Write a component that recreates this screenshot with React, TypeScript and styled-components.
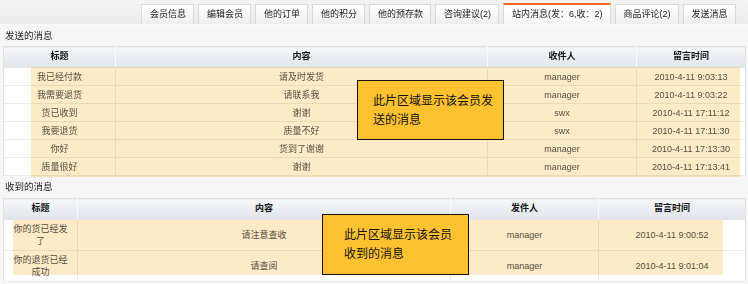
import React from 'react';
import styled, { createGlobalStyle } from 'styled-components';

const tabs = ['会员信息', '编辑会员', '他的订单', '他的积分', '他的预存款', '咨询建议(2)', '站内消息(发：6,收：2)', '商品评论(2)', '发送消息'];
const activeTab = 6;

const sent = [
  { title: '我已经付款', content: '请及时发货', who: 'manager', time: '2010-4-11 9:03:13' },
  { title: '我需要退货', content: '请联系我', who: 'manager', time: '2010-4-11 9:03:22' },
  { title: '货已收到', content: '谢谢', who: 'swx', time: '2010-4-11 17:11:12' },
  { title: '我要退货', content: '质量不好', who: 'swx', time: '2010-4-11 17:11:30' },
  { title: '你好', content: '货到了谢谢', who: 'manager', time: '2010-4-11 17:13:30' },
  { title: '质量很好', content: '谢谢', who: 'manager', time: '2010-4-11 17:13:41' },
];

const received = [
  { title: ['你的货已经发', '了'], content: '请注意查收', who: 'manager', time: '2010-4-11 9:00:52' },
  { title: ['你的退货已经', '成功'], content: '请查阅', who: 'manager', time: '2010-4-11 9:01:04' },
];

export default function App() {
  return (
    <>
      <GlobalStyle />
      <Page>
        <TabBar>
          {tabs.map((t, i) => (
            <Tab key={t} $active={i === activeTab}>
              {t}
            </Tab>
          ))}
        </TabBar>

        <SectionTitle>发送的消息</SectionTitle>
        <TableWrap>
          <Table>
            <colgroup>
              <col style={{ width: 112 }} />
              <col style={{ width: 372 }} />
              <col style={{ width: 149 }} />
              <col />
            </colgroup>
            <thead>
              <tr>
                <Th>标题</Th>
                <Th>内容</Th>
                <Th>收件人</Th>
                <Th>留言时间</Th>
              </tr>
            </thead>
            <tbody>
              {sent.map((m) => (
                <tr key={m.time}>
                  <Td $h={17}>{m.title}</Td>
                  <Td $h={17}>{m.content}</Td>
                  <Td $h={17}>{m.who}</Td>
                  <Td $h={17}>{m.time}</Td>
                </tr>
              ))}
            </tbody>
          </Table>
          <Highlight $left={28} $top={21} $width={709} $height={110} />
          <Note $left={354} $top={34} $width={147} $height={60} $pad={15}>
            <span>此片区域显示该会员发</span>
            <span>送的消息</span>
          </Note>
        </TableWrap>

        <SectionTitle $gap>收到的消息</SectionTitle>
        <TableWrap>
          <Table>
            <colgroup>
              <col style={{ width: 74 }} />
              <col style={{ width: 373 }} />
              <col style={{ width: 148 }} />
              <col />
            </colgroup>
            <thead>
              <tr>
                <Th>标题</Th>
                <Th>内容</Th>
                <Th>发件人</Th>
                <Th>留言时间</Th>
              </tr>
            </thead>
            <tbody>
              {received.map((m) => (
                <tr key={m.time}>
                  <Td $h={30}>
                    {m.title[0]}
                    <br />
                    {m.title[1]}
                  </Td>
                  <Td $h={30}>{m.content}</Td>
                  <Td $h={30}>{m.who}</Td>
                  <Td $h={30}>{m.time}</Td>
                </tr>
              ))}
            </tbody>
          </Table>
          <Highlight $left={10} $top={22} $width={710} $height={55} />
          <Note $left={319} $top={16} $width={147} $height={61} $pad={21}>
            <span>此片区域显示该会员</span>
            <span>收到的消息</span>
          </Note>
        </TableWrap>
      </Page>
    </>
  );
}

const GlobalStyle = createGlobalStyle`
  html, body {
    margin: 0;
    padding: 0;
    background: #f6f6f6;
  }
  body {
    font: normal normal 9px/1.3 'Liberation Sans', 'Noto Sans CJK SC', sans-serif;
    color: #555;
  }
`;

const Page = styled.div`
  width: 748px;
  height: 284px;
  overflow: hidden;
  padding: 0 2px 0 3px;
  box-sizing: border-box;
`;

const TabBar = styled.div`
  display: flex;
  justify-content: flex-end;
  align-items: flex-end;
  gap: 4px;
  height: 24px;
  margin: 0 -2px 0 -3px;
  padding-right: 12px;
  background: linear-gradient(#f3f3f3, #ececec);
  border-bottom: 1px solid #fafafa;
`;

const Tab = styled.div<{ $active?: boolean }>`
  box-sizing: border-box;
  padding: 0 7.5px;
  display: flex;
  align-items: center;
  white-space: nowrap;
  color: #222;
  border: 1px solid #d9d9d9;
  border-bottom: none;
  border-top: ${(p) => (p.$active ? '2px solid #ef6c1f' : '1px solid #d9d9d9')};
  background: ${(p) => (p.$active ? 'linear-gradient(#ffffff, #f6f6f6)' : 'linear-gradient(#ffffff, #eeeeee)')};
  height: ${(p) => (p.$active ? '21px' : '20px')};
`;

const SectionTitle = styled.div<{ $gap?: boolean }>`
  height: ${(p) => (p.$gap ? '22px' : '21px')};
  display: flex;
  align-items: center;
  padding: ${(p) => (p.$gap ? '1px 0 0 2px' : '2px 0 0 2px')};
  box-sizing: border-box;
  color: #222;
  font-size: 9.5px;
`;

const TableWrap = styled.div`
  position: relative;
`;

const Table = styled.table`
  width: 100%;
  table-layout: fixed;
  border-collapse: collapse;
  background: #fff;
  border: 1px solid #e0e0e0;
`;

const Th = styled.th`
  height: 20px;
  padding: 0;
  font-weight: bold;
  color: #111;
  text-align: center;
  background: linear-gradient(#f5f7f9, #dfe5ec);
  border-left: 1px solid #fbfcfd;
  border-bottom: 1px solid #e6e6e6;
  &:first-child {
    border-left: none;
  }
`;

const Td = styled.td<{ $h: number }>`
  height: ${(p) => p.$h}px;
  padding: 0;
  line-height: 12px;
  text-align: center;
  color: #555;
  border-bottom: 1px solid #ececec;
  border-left: 1px solid #ececec;
  &:first-child {
    border-left: none;
  }
`;

const Highlight = styled.div<{ $left: number; $top: number; $width: number; $height: number }>`
  position: absolute;
  left: ${(p) => p.$left}px;
  top: ${(p) => p.$top}px;
  width: ${(p) => p.$width}px;
  height: ${(p) => p.$height}px;
  background: #fdeac6;
  mix-blend-mode: multiply;
  pointer-events: none;
`;

const Note = styled.div<{ $left: number; $top: number; $width: number; $height: number; $pad: number }>`
  position: absolute;
  left: ${(p) => p.$left}px;
  top: ${(p) => p.$top}px;
  width: ${(p) => p.$width}px;
  height: ${(p) => p.$height}px;
  box-sizing: border-box;
  padding: 9px 0 0 ${(p) => p.$pad}px;
  display: flex;
  flex-direction: column;
  background: #fec231;
  border: 1px solid #111;
  color: #111;
  font-size: 12px;
  font-family: 'Noto Sans CJK SC', sans-serif;
  line-height: 19px;
  white-space: nowrap;
`;
